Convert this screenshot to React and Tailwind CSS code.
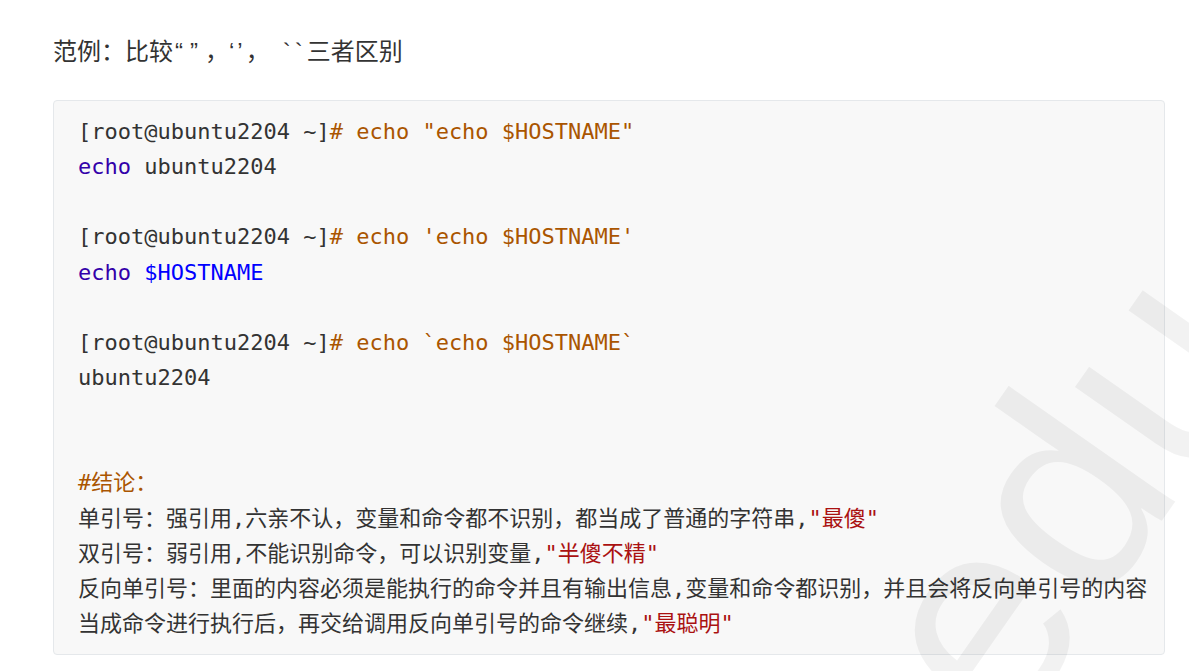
const mono = { fontFamily: '"DejaVu Sans Mono", "Noto Sans CJK SC", monospace' };

const lines = [
  [["[root@ubuntu2204 ~]", "text-[#333]"], ['# echo "echo $HOSTNAME"', "text-[#a50]"]],
  [["echo", "text-[#30a]"], [" ubuntu2204", "text-[#333]"]],
  [],
  [["[root@ubuntu2204 ~]", "text-[#333]"], ["# echo 'echo $HOSTNAME'", "text-[#a50]"]],
  [["echo", "text-[#30a]"], [" ", "text-[#333]"], ["$HOSTNAME", "text-[#00f]"]],
  [],
  [["[root@ubuntu2204 ~]", "text-[#333]"], ["# echo `echo $HOSTNAME`", "text-[#a50]"]],
  [["ubuntu2204", "text-[#333]"]],
  [],
  [],
  [["#结论：", "text-[#a50]"]],
  [["单引号：强引用,六亲不认，变量和命令都不识别，都当成了普通的字符串,", "text-[#333]"], ['"最傻"', "text-[#a11]"]],
  [["双引号：弱引用,不能识别命令，可以识别变量,", "text-[#333]"], ['"半傻不精"', "text-[#a11]"]],
  [["反向单引号：里面的内容必须是能执行的命令并且有输出信息,变量和命令都识别，并且会将反向单引号的内容", "text-[#333]"]],
  [["当成命令进行执行后，再交给调用反向单引号的命令继续,", "text-[#333]"], ['"最聪明"', "text-[#a11]"]],
];

export default function App() {
  return (
    <div className="relative h-[671px] w-full overflow-hidden bg-white pl-[53px] pr-[24px] pt-[36px]">
      <h3
        className="whitespace-nowrap text-[24px] leading-[32px] text-[#333]"
        style={{ fontFamily: '"Liberation Sans", "Noto Sans CJK SC", sans-serif' }}
      >
        范例：比较
        <span className="pl-[2px] tracking-[7px]">“”</span>，
        <span className="tracking-[3px]">‘’</span>，
        <span className="pl-[13px] tracking-[4px]">``</span>
        三者区别
      </h3>

      <pre
        className="mt-[32px] rounded-[4px] border border-[#e5e8eb] bg-[#f8f8f8] pb-[13px] pl-[24px] pt-[13px] text-[22px] leading-[35.15px]"
        style={mono}
      >
        {lines.map((parts, i) => (
          <div key={i} className="h-[35.15px] whitespace-pre">
            {parts.length === 0
              ? " "
              : parts.map(([t, c], j) => (
                  <span key={j} className={c}>
                    {t}
                  </span>
                ))}
          </div>
        ))}
      </pre>

      {/* watermark */}
      <span
        className="pointer-events-none absolute left-[828px] top-[355px] w-[467px] rotate-[-55deg] select-none whitespace-nowrap text-[280px] leading-none text-black/[0.05]"
        style={{ fontFamily: '"Liberation Sans", sans-serif' }}
      >
        edu
      </span>
    </div>
  );
}
